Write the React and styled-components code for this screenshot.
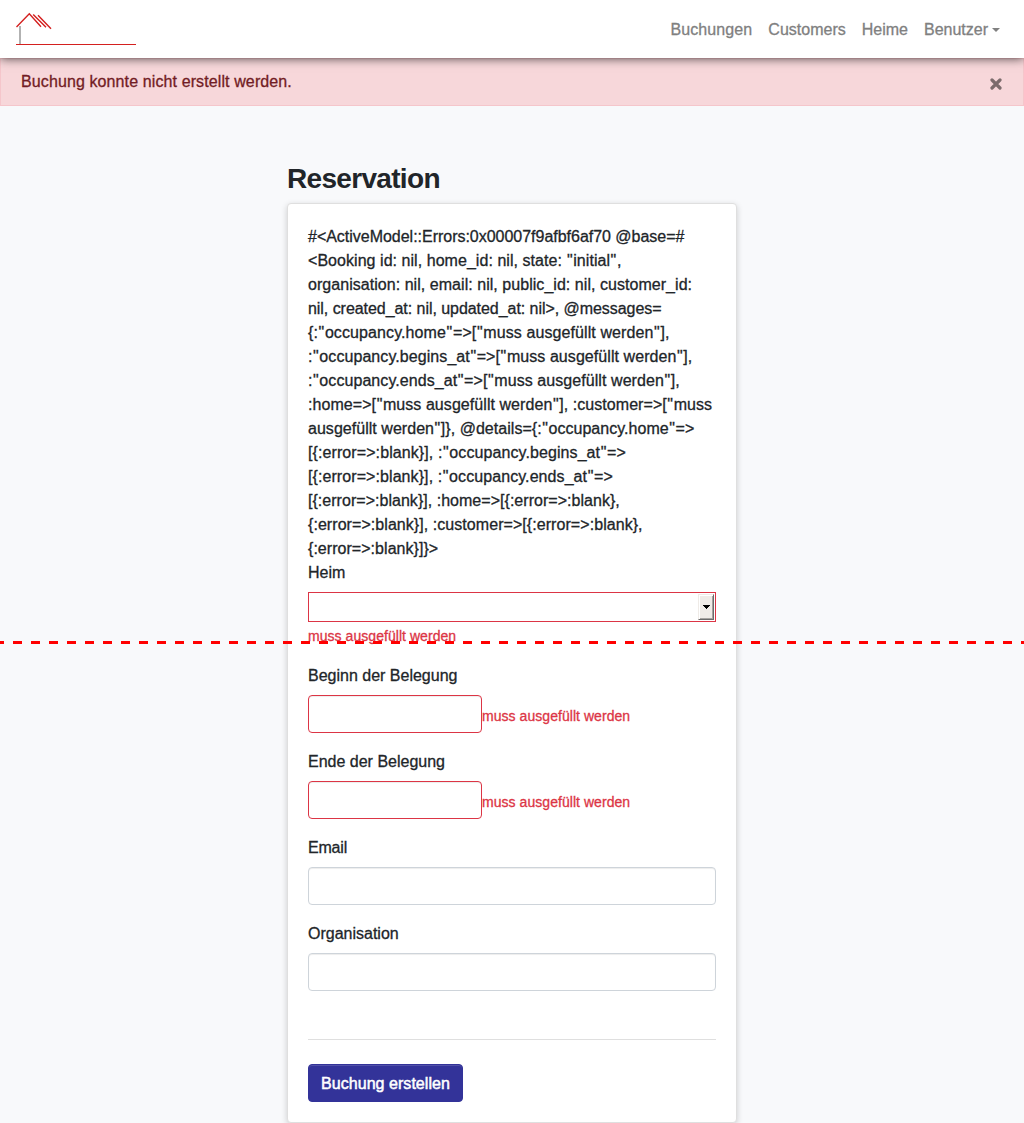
import React from "react";
import styled, { createGlobalStyle } from "styled-components";

const GlobalStyle = createGlobalStyle`
  *, *::before, *::after { box-sizing: border-box; }
  body {
    margin: 0;
    background: #f8f9fb;
    color: #212529;
    font: 400 16px/24px "Liberation Sans", Arial, sans-serif;
    -webkit-text-stroke: 0.3px currentColor;
    overflow: hidden;
  }
  #root { position: relative; }
`;

const Navbar = styled.nav`
  position: relative;
  z-index: 1;
  display: flex;
  align-items: center;
  justify-content: space-between;
  height: 58px;
  padding: 0 16px;
  background: #fff;
  box-shadow: 0 0 10px rgba(0, 0, 0, 0.75);
`;

const Logo = styled.svg`
  display: block;
  width: 120px;
  height: 34px;
`;

const NavList = styled.div`
  display: flex;
`;

const NavLink = styled.a`
  display: flex;
  align-items: center;
  padding: 10px 8px 8px;
  color: #808080;
  letter-spacing: ${(p) => p.$spacing || 0}px;
`;

const Caret = styled.span`
  margin: -1px 0 0 4px;
  border-top: 4px solid currentColor;
  border-left: 4px solid transparent;
  border-right: 4px solid transparent;
`;

const Alert = styled.div`
  display: flex;
  justify-content: space-between;
  height: 48px;
  padding: 11px 21px 11px 20px;
  background: #f7d7da;
  border: 1px solid #f5c6cb;
  color: #721c24;
  letter-spacing: 0.11px;
`;

const CloseIcon = styled.svg`
  width: 12px;
  height: 12px;
  margin-top: 7.5px;
`;

const Main = styled.main`
  width: 450px;
  margin: 0 auto;
  padding-top: 56px;
`;

const Title = styled.h1`
  margin: 0 0 7px;
  font-size: 28px;
  line-height: 34px;
  font-weight: 700;
  letter-spacing: -0.68px;
  -webkit-text-stroke: 0;
`;

const Card = styled.section`
  height: 920px;
  padding: 21px 20px 20px;
  background: #fff;
  border: 1px solid #dfdfdf;
  border-radius: 4px;
  box-shadow: 0 2px 6px rgba(0, 0, 0, 0.18);
`;

const Line = styled.div`
  white-space: pre;
  letter-spacing: ${(p) => p.$spacing || 0}px;
`;

const Quote = styled.span`
  padding: 0 0.55px;
`;

const Field = styled.div`
  margin-bottom: 17px;
`;

const Label = styled.label`
  display: block;
  margin-bottom: 7px;
  letter-spacing: ${(p) => p.$spacing || 0}px;
`;

const InputRow = styled.div`
  display: flex;
  align-items: center;
`;

const Input = styled.input`
  display: block;
  width: ${(p) => (p.$invalid ? "174px" : "100%")};
  height: 38px;
  border: 1px solid ${(p) => (p.$invalid ? "#dc3545" : "#ced4da")};
  border-radius: 4px;
  background: #fff;
  box-shadow: inset 0 1px 1px rgba(0, 0, 0, 0.075);
`;

const SelectBox = styled.div`
  display: flex;
  justify-content: flex-end;
  height: 30px;
  padding: 1px;
  border: 1px solid #dc3545;
`;

const SelectButton = styled.span`
  display: flex;
  align-items: center;
  justify-content: center;
  width: 16px;
  height: 26px;
  background: #efebe7;
  border: 1px solid;
  border-color: #efebe7 #6b6b6b #6b6b6b #efebe7;
  box-shadow: inset 1px 1px #fff, inset -1px -1px #a5a29f;
`;

const Feedback = styled.div`
  margin-top: ${(p) => (p.$below ? "4px" : "5px")};
  font-size: 14px;
  line-height: 21px;
  letter-spacing: 0.05px;
  color: #dc3545;
`;

const Divider = styled.hr`
  margin: 48px 0 24px;
  border: 0;
  border-top: 1px solid #dfdfdf;
`;

const Submit = styled.button`
  display: block;
  width: 155px;
  height: 38px;
  padding: 2px 0 0;
  border: 1px solid #333399;
  border-radius: 4px;
  background: #333399;
  box-shadow: inset 0 1px 0 rgba(255, 255, 255, 0.15);
  color: #fff;
  font: inherit;
  letter-spacing: 0.04px;
  -webkit-text-stroke: 0.5px #fff;
`;

const FoldLine = styled.div`
  position: absolute;
  top: 641px;
  left: 0;
  right: 0;
  height: 3px;
  background: repeating-linear-gradient(90deg, #f00 0 9px, transparent 9px 18px) -5px 0 / 1044px 3px;
`;

const dump = [
  ["#<ActiveModel::Errors:0x00007f9afbf6af70 @base=#", -0.02],
  ["<Booking id: nil, home_id: nil, state: \"initial\",", 0.047],
  ["organisation: nil, email: nil, public_id: nil, customer_id:", 0.043],
  ["nil, created_at: nil, updated_at: nil>, @messages=", -0.05],
  ["{:\"occupancy.home\"=>[\"muss ausgefüllt werden\"],", 0.1],
  [":\"occupancy.begins_at\"=>[\"muss ausgefüllt werden\"],", 0.07],
  [":\"occupancy.ends_at\"=>[\"muss ausgefüllt werden\"],", 0.07],
  [":home=>[\"muss ausgefüllt werden\"], :customer=>[\"muss", 0.06],
  ["ausgefüllt werden\"]}, @details={:\"occupancy.home\"=>", 0.035],
  ["[{:error=>:blank}], :\"occupancy.begins_at\"=>", 0.09],
  ["[{:error=>:blank}], :\"occupancy.ends_at\"=>", 0.08],
  ["[{:error=>:blank}], :home=>[{:error=>:blank},", 0.03],
  ["{:error=>:blank}], :customer=>[{:error=>:blank},", 0.06],
  ["{:error=>:blank}]}>", 0.04],
];

function DumpLine({ text, spacing }) {
  return (
    <Line $spacing={spacing}>
      {text.split(/(")/).map((part, i) =>
        part === '"' ? <Quote key={i}>{part}</Quote> : part
      )}
    </Line>
  );
}

export default function App() {
  return (
    <>
      <GlobalStyle />
      <Navbar>
        <Logo viewBox="16 12 120 34" fill="none" stroke="#d4201f">
          <path d="M20 26v18" stroke="#aaa" strokeWidth="1.8" />
          <path d="M16.5 27 29.3 13.8 41 26.7M33.2 14.4 46 27.3M38 15.2 51 28.7" strokeWidth="1.4" />
          <path d="M16 44.5h120" />
        </Logo>
        <NavList>
          <NavLink $spacing={0.1}>Buchungen</NavLink>
          <NavLink>Customers</NavLink>
          <NavLink>Heime</NavLink>
          <NavLink>Benutzer<Caret /></NavLink>
        </NavList>
      </Navbar>
      <Alert>
        <span>Buchung konnte nicht erstellt werden.</span>
        <CloseIcon viewBox="0 0 12 12" stroke="#7c6c6d" strokeWidth="3.2" strokeLinecap="round">
          <path d="M2 2l8 8M10 2l-8 8" />
        </CloseIcon>
      </Alert>
      <Main>
        <Title>Reservation</Title>
        <Card>
          {dump.map(([text, spacing], i) => (
            <DumpLine key={i} text={text} spacing={spacing} />
          ))}
          <Field>
            <Label>Heim</Label>
            <SelectBox>
              <SelectButton>
                <svg width="7" height="4" shapeRendering="crispEdges">
                  <path d="M0 0h7v1H6v1H5v1H4v1H3V3H2V2H1V1H0z" />
                </svg>
              </SelectButton>
            </SelectBox>
            <Feedback $below>muss ausgefüllt werden</Feedback>
          </Field>
          <Field>
            <Label>Beginn der Belegung</Label>
            <InputRow><Input $invalid /><Feedback>muss ausgefüllt werden</Feedback></InputRow>
          </Field>
          <Field>
            <Label>Ende der Belegung</Label>
            <InputRow><Input $invalid /><Feedback>muss ausgefüllt werden</Feedback></InputRow>
          </Field>
          <Field>
            <Label $spacing={-0.2}>Email</Label>
            <Input />
          </Field>
          <Field>
            <Label>Organisation</Label>
            <Input />
          </Field>
          <Divider />
          <Submit>Buchung erstellen</Submit>
        </Card>
      </Main>
      <FoldLine />
    </>
  );
}
